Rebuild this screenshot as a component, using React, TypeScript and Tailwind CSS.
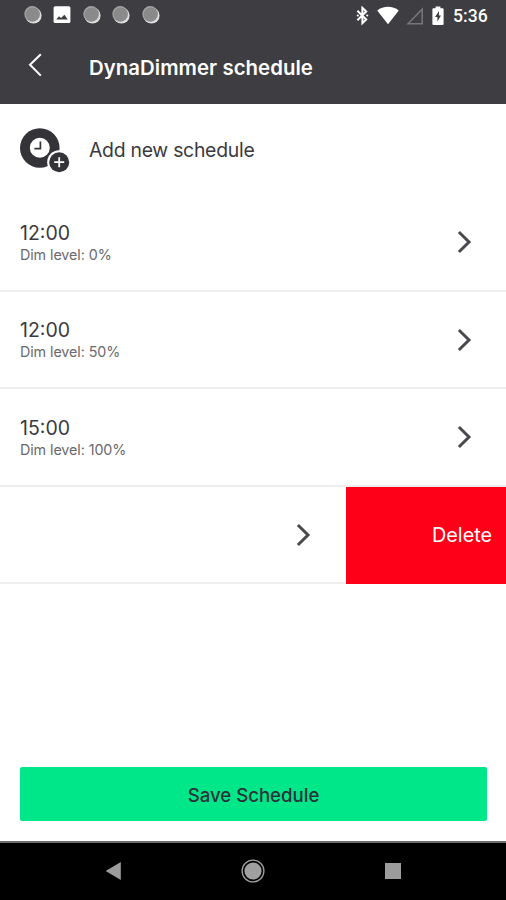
import clsx from "clsx";

interface Schedule {
  time: string;
  level: number;
}

const schedules: Schedule[] = [
  { time: "12:00", level: 0 },
  { time: "12:00", level: 50 },
  { time: "15:00", level: 100 },
];

function NotificationDot() {
  return (
    <svg className="h-[18px] w-[18px]" viewBox="0 0 18 18">
      <circle cx="9.5" cy="9.5" r="8.1" fill="#dedede" />
      <circle cx="8.2" cy="8" r="7.9" fill="#a2a2a2" />
      <circle cx="8.6" cy="8.4" r="6.9" fill="#8a8a8a" />
    </svg>
  );
}

function PictureIcon() {
  return (
    <svg className="h-[18px] w-[18px]" viewBox="0 0 18 18">
      <rect x="0.6" y="0.2" width="16.8" height="16.8" rx="1.6" fill="#fff" />
      <path d="M3.2 13.4 6 10.2 8 12 11.4 8.8 14.8 13.4Z" fill="#3e3d42" />
    </svg>
  );
}

function StatusBar() {
  return (
    <div className="flex h-[31px] items-center justify-between pl-[23.5px] pr-[19px]">
      <div className="flex items-center gap-[11.5px] pb-px">
        <NotificationDot />
        <PictureIcon />
        <NotificationDot />
        <NotificationDot />
        <NotificationDot />
      </div>
      <div className="flex items-center">
        <svg className="h-[20px] w-[14px]" viewBox="0 0 14 20" fill="none">
          <path
            d="M1.4 4.8 10.2 13.6 6.4 17.2V1.8L10.2 5.4 1.4 14.2"
            stroke="#fff"
            strokeWidth="2"
          />
          <circle cx="1.8" cy="9.5" r="1.1" fill="#fff" />
          <circle cx="11.2" cy="9.5" r="1.1" fill="#fff" />
        </svg>
        <svg className="ml-[7px] h-[20px] w-[22px]" viewBox="0 0 22 20">
          <path d="M0.2 4.6C6.4 -0.4 15.6 -0.4 21.8 4.6L11 18.2Z" fill="#fff" />
        </svg>
        <svg className="ml-[7px] h-[20px] w-[18px]" viewBox="0 0 18 20" fill="none">
          <path d="M2 17.8H16.2V3.2Z" stroke="#77767b" strokeWidth="1.5" />
        </svg>
        <svg className="ml-[8px] mr-[9px] h-[20px] w-[12px]" viewBox="0 0 12 20">
          <path
            d="M1.4 2.2H3.6V0.4H8.4V2.2H10.6Q11.6 2.2 11.6 3.2V18Q11.6 19 10.6 19H1.4Q0.4 19 0.4 18V3.2Q0.4 2.2 1.4 2.2Z"
            fill="#fff"
          />
          <path d="M7 5 3 11H5.4V15.6L9 9.4H7Z" fill="#3e3d42" />
        </svg>
        <span className="w-[34px] whitespace-nowrap font-[Roboto,sans-serif] text-[17.6px] font-medium leading-5 text-white">
          5:36
        </span>
      </div>
    </div>
  );
}

function Header() {
  return (
    <header className="h-[104px] bg-[#3e3d42]">
      <StatusBar />
      <div className="flex h-[73px] items-start pl-[28px]">
        <button className="mt-[22px]" aria-label="Back">
          <svg className="h-[24px] w-[14px]" viewBox="0 0 14 24" fill="none">
            <path d="M12.8 1.2 2 11.8 12.8 22.6" stroke="#fff" strokeWidth="2" />
          </svg>
        </button>
        <h1 className="ml-[47px] mt-[23px] whitespace-nowrap text-[20.4px] font-semibold leading-7 tracking-[0.04px] text-white">
          DynaDimmer schedule
        </h1>
      </div>
    </header>
  );
}

function ClockPlusIcon() {
  return (
    <svg className="mt-[3px] h-[46px] w-[50px]" viewBox="0 0 50 46">
      <circle cx="19.8" cy="20" r="19.8" fill="#343338" />
      <circle cx="19.8" cy="19.8" r="10" fill="#fff" />
      <path d="M20.4 13.6V20.6H14.4" stroke="#343338" strokeWidth="1.7" fill="none" />
      <circle cx="39.2" cy="34.2" r="12" fill="#fff" />
      <circle cx="39.2" cy="34.2" r="10" fill="#343338" />
      <path d="M39.2 29.2V39.2M34.2 34.2H44.2" stroke="#fff" strokeWidth="1.8" />
    </svg>
  );
}

function Chevron({ className }: { className?: string }) {
  return (
    <svg className={clsx("h-[24px] w-[16px]", className)} viewBox="0 0 16 24" fill="none">
      <path d="M1.9 2 12 12 1.9 22" stroke="#4a494d" strokeWidth="3" />
    </svg>
  );
}

function ScheduleRow({ time, level }: Schedule) {
  return (
    <li className="flex h-[97.5px] items-center justify-between border-b-2 border-[#eeeeee] pl-[20px] pr-[33px]">
      <div className="pt-[2px] text-[#3b3a3e]">
        <p className="text-[19.5px] leading-[23px]">{time}</p>
        <p className="text-[14.3px] leading-[19px] tracking-[-0.08px] text-[#6a696d]">
          Dim level: {level}%
        </p>
      </div>
      <Chevron className="mt-px" />
    </li>
  );
}

export default function App() {
  return (
    <div className="flex h-[900px] w-[506px] flex-col overflow-hidden bg-white font-[Inter,sans-serif]">
      <Header />
      <main className="flex flex-1 flex-col">
        <button className="flex h-[90px] items-center pl-[20px] text-left">
          <ClockPlusIcon />
          <span className="ml-[19px] pt-[3px] text-[19.4px] tracking-[-0.27px] text-[#3b3a3e]">
            Add new schedule
          </span>
        </button>
        <ul>
          {schedules.map((item, i) => (
            <ScheduleRow key={i} {...item} />
          ))}
          <li className="flex h-[97.5px]">
            <div className="flex w-[346px] items-center justify-end border-b-2 border-[#eeeeee] pr-[34px]">
              <Chevron className="mt-px" />
            </div>
            <button className="flex flex-1 items-center justify-end bg-[#ff0019] pr-[14px] pt-[2px] text-[19.8px] text-white">
              Delete
            </button>
          </li>
        </ul>
        <button className="mx-[20px] mb-[20px] mt-auto h-[54px] w-[467px] rounded-[2px] bg-[#00e78a] pt-[3px] text-[18.6px] font-medium text-[#28333a]">
          Save Schedule
        </button>
      </main>
      <nav className="flex h-[59px] items-center border-t-2 border-[#6e6e6e] bg-black pb-[2px]">
        <svg className="ml-[105px] h-[20px] w-[16px]" viewBox="0 0 16 20">
          <path d="M0.6 10 15.8 1V19Z" fill="#9c9c9c" />
        </svg>
        <svg className="ml-[120px] h-[24px] w-[24px]" viewBox="0 0 24 24">
          <circle cx="12" cy="12" r="10.9" fill="none" stroke="#a0a0a0" strokeWidth="1.3" />
          <circle cx="12" cy="12" r="8.6" fill="#a0a0a0" />
        </svg>
        <div className="ml-[120px] h-[16px] w-[16px] bg-[#9c9c9c]" />
      </nav>
    </div>
  );
}
